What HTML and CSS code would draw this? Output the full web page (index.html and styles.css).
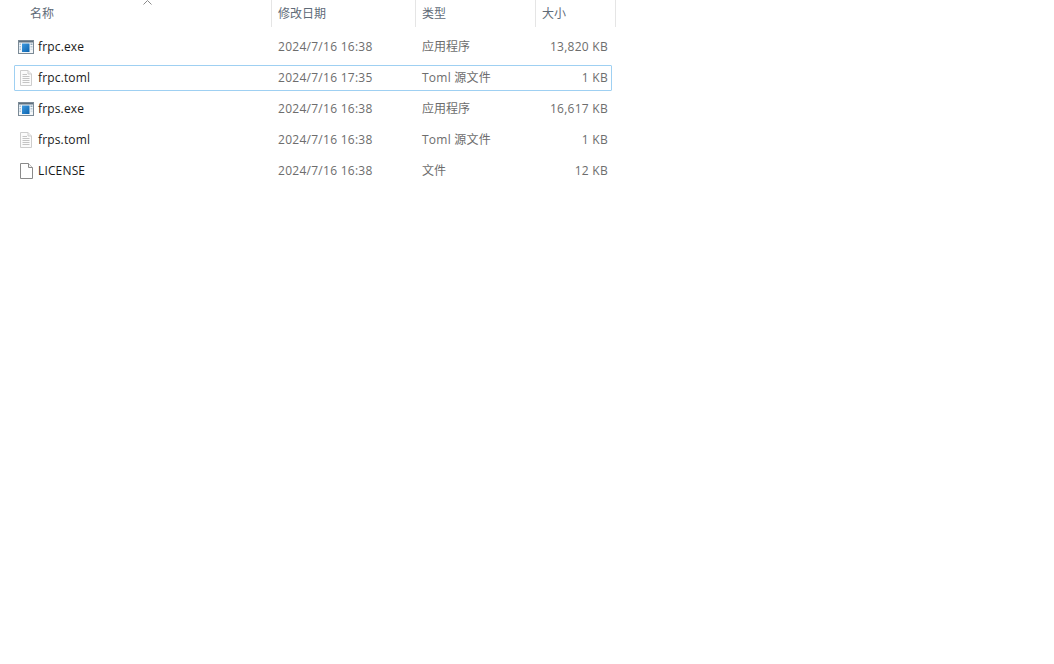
FILE: index.html
```html
<!DOCTYPE html>
<html lang="zh-CN">
<head>
    <meta charset="UTF-8">
    <title>frp</title>
    <link rel="stylesheet" href="styles.css">
</head>
<body>
    <svg class="svg-defs" width="0" height="0">
        <defs>
            <linearGradient id="exe-blue" x1="0" y1="0" x2="1" y2="1">
                <stop offset="0" stop-color="#3f9be0"/>
                <stop offset="1" stop-color="#0a62ae"/>
            </linearGradient>
        </defs>
        <symbol id="icon-exe" viewBox="0 0 16 14">
            <rect x="0.5" y="0.5" width="15" height="13" fill="#f3f6f8" stroke="#7b8a96"/>
            <rect x="1" y="1" width="14" height="1.5" fill="#5d7080"/>
            <rect x="4" y="3.5" width="7.5" height="8.5" fill="url(#exe-blue)"/>
            <rect x="1.5" y="3.5" width="1.5" height="1.5" fill="#a8c4da"/>
            <rect x="1.5" y="6" width="1.5" height="1.5" fill="#a8c4da"/>
            <rect x="1.5" y="8.5" width="1.5" height="1.5" fill="#a8c4da"/>
            <rect x="12.5" y="3.5" width="2" height="1.5" fill="#8ca6ba"/>
            <rect x="12.5" y="6" width="2" height="1.5" fill="#b4c6d4"/>
            <rect x="12.5" y="8.5" width="2" height="1.5" fill="#d2dde5"/>
        </symbol>
        <symbol id="icon-text" viewBox="0 0 12 16">
            <path d="M0.5 0.5H8L11.5 4V15.5H0.5Z" fill="#fbfbfb" stroke="#cdcdcd"/>
            <path d="M8 0.5V4H11.5" fill="#f0f0f0" stroke="#cdcdcd"/>
            <path d="M2.5 4.5H7M2.5 6.5H9.5M2.5 8.5H9.5M2.5 10.5H9.5M2.5 12.5H9.5" stroke="#c4c4c4" fill="none"/>
        </symbol>
        <symbol id="icon-blank" viewBox="0 0 13 16">
            <path d="M0.5 0.5H8.5L12.5 4.5V15.5H0.5Z" fill="#fff" stroke="#8a8a8a"/>
            <path d="M8.5 0.5V4.5H12.5" fill="#f4f4f4" stroke="#8a8a8a"/>
        </symbol>
    </svg>

    <div class="list">
        <div class="header">
            <div class="col-head col-name">
                名称
                <svg class="sort-arrow" width="9" height="5" viewBox="0 0 9 5"><path d="M0.5 4.5L4.5 0.5L8.5 4.5" fill="none" stroke="#8a8a8a"/></svg>
            </div>
            <div class="col-head">修改日期</div>
            <div class="col-head">类型</div>
            <div class="col-head">大小</div>
        </div>

        <div class="row">
            <div class="cell-name"><svg class="icon icon-exe"><use href="#icon-exe"/></svg>frpc.exe</div>
            <div class="cell cell-num">2024/7/16 16:38</div>
            <div class="cell">应用程序</div>
            <div class="cell cell-num cell-size">13,820 KB</div>
        </div>
        <div class="row selected">
            <div class="cell-name"><svg class="icon icon-text"><use href="#icon-text"/></svg>frpc.toml</div>
            <div class="cell cell-num">2024/7/16 17:35</div>
            <div class="cell cell-type">Toml 源文件</div>
            <div class="cell cell-num cell-size">1 KB</div>
        </div>
        <div class="row">
            <div class="cell-name"><svg class="icon icon-exe"><use href="#icon-exe"/></svg>frps.exe</div>
            <div class="cell cell-num">2024/7/16 16:38</div>
            <div class="cell">应用程序</div>
            <div class="cell cell-num cell-size">16,617 KB</div>
        </div>
        <div class="row">
            <div class="cell-name"><svg class="icon icon-text"><use href="#icon-text"/></svg>frps.toml</div>
            <div class="cell cell-num">2024/7/16 16:38</div>
            <div class="cell cell-type">Toml 源文件</div>
            <div class="cell cell-num cell-size">1 KB</div>
        </div>
        <div class="row">
            <div class="cell-name"><svg class="icon icon-blank"><use href="#icon-blank"/></svg>LICENSE</div>
            <div class="cell cell-num">2024/7/16 16:38</div>
            <div class="cell">文件</div>
            <div class="cell cell-num cell-size">12 KB</div>
        </div>
    </div>
</body>
</html>
```

FILE: styles.css
```css
html, body { margin: 0; background: #fff; }
body { font-family: "Open Sans", "Noto Sans CJK SC", sans-serif; font-size: 12px; line-height: 16px; height: 664px; overflow: hidden; }
.svg-defs { display: block; height: 0; }
.list { width: 616px; display: flex; flex-direction: column; gap: 5px; }

.header { display: grid; grid-template-columns: 272px 144px 120px 80px; height: 27px; margin-bottom: 2px; color: #5f6b78; }
.col-head { position: relative; border-right: 1px solid #e5e5e5; padding-left: 6px; line-height: 27px; }
.col-name { padding-left: 30px; }
.sort-arrow { position: absolute; left: 143px; top: 0; }

.row { display: grid; grid-template-columns: 257px 144px 120px 75px; height: 24px; margin-left: 14px; width: 596px; border: 1px solid transparent; border-radius: 1px; align-items: center; color: #6d6d6d; }
.row.selected { border-color: #9fd0f2; }
.cell-name { display: flex; align-items: center; color: #1a1a1a; padding-left: 3px; letter-spacing: 0.15px; }
.cell { padding-left: 6px; }
.cell-num { letter-spacing: 0.27px; }
.cell-type { letter-spacing: 0.25px; }
.cell-size { text-align: right; padding-right: 3px; }

.icon { flex: none; margin-right: 4px; }
.icon-exe { width: 16px; height: 14px; }
.icon-text { width: 12px; height: 16px; margin-left: 2px; margin-right: 6px; }
.icon-blank { width: 13px; height: 16px; margin-left: 2px; margin-right: 5px; }
```
